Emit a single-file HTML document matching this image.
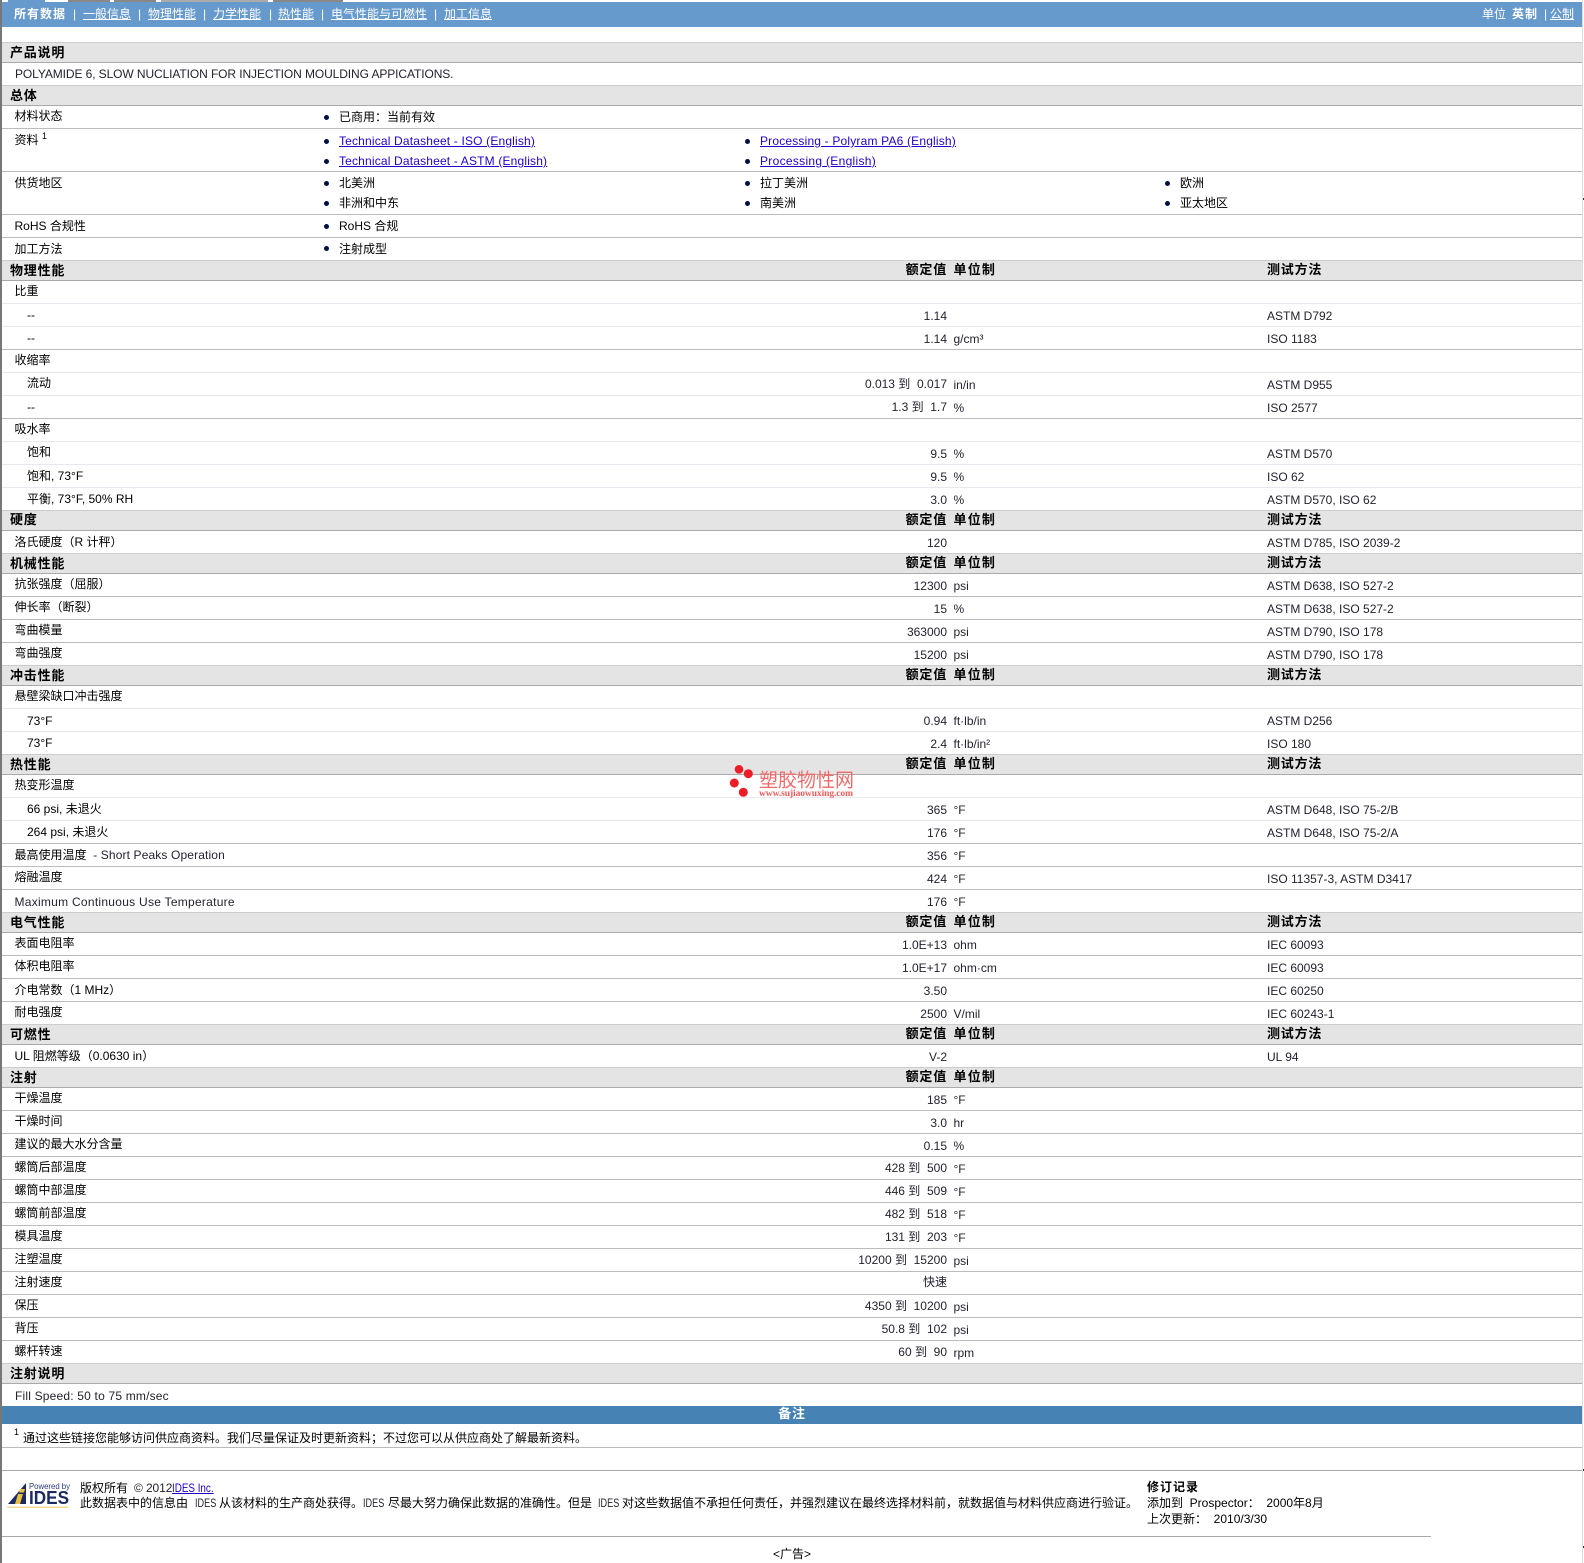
<!DOCTYPE html>
<html lang="zh"><head><meta charset="utf-8"><title>PA6</title>
<style>
html,body{margin:0;padding:0;background:#fff}
body{position:relative;width:1584px;height:1563px;overflow:hidden;font:12px/1 "Liberation Sans","WenQuanYi Zen Hei","Noto Sans CJK SC",sans-serif;color:#222230}
.r,.g{position:absolute;left:2px;width:1580px;box-sizing:border-box}
.r{height:23px;border-bottom:1px solid #bbbbc0}
.m{border-bottom-color:#e8e8ee}
.g{height:21px;background:#e4e4e4;border-top:1px solid #ccc;border-bottom:1px solid #aaa;font-weight:bold;font-size:13px;letter-spacing:.8px;color:#000}
.r span,.g span,.a{position:absolute;white-space:nowrap}
.l{left:12.5px;top:0;line-height:21px;color:#000}
.l2{line-height:23px}
.s{left:25px;top:0;line-height:22px;color:#000}
.s2{line-height:20px}
.v{right:635px;top:0;line-height:24px}
.d{top:-1px}
.u{left:951.5px;top:0;line-height:24px}
.t{left:1265px;top:0;line-height:24px}
.h{left:8px;top:0;line-height:19px}
.hv{right:635px;top:-1px;line-height:19px}
.hu{left:951.5px;top:-1px;line-height:19px;letter-spacing:1.2px}
.ht{left:1265px;top:-1px;line-height:19px}
.a{line-height:16px;color:#000}
.b{position:absolute;width:5px;height:5px;border-radius:50%;background:#001040}
a{color:#2200cc;text-decoration:underline}
i{font-style:normal}
.n{color:#fff;font-size:12px}
.n a{color:#fff}
.q{transform-origin:0 50%;color:#222230}
</style></head><body>
<div style="position:absolute;left:0;top:0;width:2px;height:1563px;background:#777"></div>
<div style="position:absolute;left:1582px;top:0;width:1px;height:1563px;background:#ddd"></div>
<div style="position:absolute;left:1583px;top:198px;width:1px;height:2px;background:#333"></div>
<div style="position:absolute;left:1583px;top:1469px;width:1px;height:2px;background:#333"></div>
<div style="position:absolute;left:1583px;top:1546px;width:1px;height:2px;background:#333"></div>
<div style="position:absolute;left:8px;top:0;width:37px;height:2px;background:#6699cc"></div>
<div style="position:absolute;left:68px;top:0;width:42px;height:2px;background:#888"></div>
<div style="position:absolute;left:114px;top:0;width:42px;height:2px;background:#888"></div>
<div style="position:absolute;left:161px;top:0;width:107px;height:2px;background:#aaa"></div>
<div style="position:absolute;left:273px;top:0;width:70px;height:2px;background:#888"></div>
<div style="position:absolute;left:2px;top:2px;width:1580px;height:25px;background:#6699cc"></div>
<div class="a n" style="left:14px;top:6px;font-weight:bold;letter-spacing:1px">所有数据</div>
<div class="a n" style="left:73px;top:6px">|</div><div class="a n" style="left:83px;top:6px"><a>一般信息</a></div>
<div class="a n" style="left:138px;top:6px">|</div><div class="a n" style="left:148px;top:6px"><a>物理性能</a></div>
<div class="a n" style="left:203px;top:6px">|</div><div class="a n" style="left:213px;top:6px"><a>力学性能</a></div>
<div class="a n" style="left:269px;top:6px">|</div><div class="a n" style="left:278px;top:6px"><a>热性能</a></div>
<div class="a n" style="left:321px;top:6px">|</div><div class="a n" style="left:331px;top:6px"><a>电气性能与可燃性</a></div>
<div class="a n" style="left:434px;top:6px">|</div><div class="a n" style="left:444px;top:6px"><a>加工信息</a></div>
<div class="a n" style="left:1482px;top:6px">单位</div>
<div class="a n" style="left:1512px;top:6px;font-weight:bold;letter-spacing:1px">英制</div>
<div class="a n" style="left:1544px;top:6px">|</div>
<div class="a n" style="left:1550px;top:6px"><a>公制</a></div>

<div class="g" style="top:42px"><span class="h">产品说明</span></div>
<div class="r" style="top:63px;height:22px;border:0"><span class="l" style="left:13px;top:1px;color:#222230;letter-spacing:-.095px">POLYAMIDE 6, SLOW NUCLIATION FOR INJECTION MOULDING APPICATIONS.</span></div>
<div class="g" style="top:85px"><span class="h">总体</span></div>
<div class="r" style="top:106px"><span class="l">材料状态</span></div>
<div class="r" style="top:129px;height:43px"><span class="l l2">资料 <sup style="font-size:9px;line-height:0">1</sup></span></div>
<div class="r" style="top:172px;height:43px"><span class="l l2">供货地区</span></div>
<div class="r" style="top:215px"><span class="l l2">RoHS 合规性</span></div>
<div class="r" style="top:238px;height:22px;border:0"><span class="l l2">加工方法</span></div>

<i class="b" style="left:324px;top:115px"></i><div class="a" style="left:339px;top:109px">已商用：当前有效</div>
<i class="b" style="left:324px;top:139px"></i><div class="a" style="left:339px;top:133px;letter-spacing:.17px"><a>Technical Datasheet - ISO (English)</a></div>
<i class="b" style="left:324px;top:159px"></i><div class="a" style="left:339px;top:153px;letter-spacing:.17px"><a>Technical Datasheet - ASTM (English)</a></div>
<i class="b" style="left:745px;top:139px"></i><div class="a" style="left:760px;top:133px;letter-spacing:.18px"><a>Processing - Polyram PA6 (English)</a></div>
<i class="b" style="left:745px;top:159px"></i><div class="a" style="left:760px;top:153px;letter-spacing:.3px"><a>Processing (English)</a></div>
<i class="b" style="left:324px;top:181px"></i><div class="a" style="left:339px;top:175px">北美洲</div>
<i class="b" style="left:324px;top:201px"></i><div class="a" style="left:339px;top:195px">非洲和中东</div>
<i class="b" style="left:745px;top:181px"></i><div class="a" style="left:760px;top:175px">拉丁美洲</div>
<i class="b" style="left:745px;top:201px"></i><div class="a" style="left:760px;top:195px">南美洲</div>
<i class="b" style="left:1165px;top:181px"></i><div class="a" style="left:1180px;top:175px">欧洲</div>
<i class="b" style="left:1165px;top:201px"></i><div class="a" style="left:1180px;top:195px">亚太地区</div>
<i class="b" style="left:324px;top:224px"></i><div class="a" style="left:339px;top:218px">RoHS 合规</div>
<i class="b" style="left:324px;top:246px"></i><div class="a" style="left:339px;top:241px">注射成型</div>

<div class="g" style="top:260px"><span class="h">物理性能</span><span class="hv">额定值</span><span class="hu">单位制</span><span class="ht">测试方法</span></div>
<div class="r m" style="top:281px"><span class="l">比重</span></div>
<div class="r m" style="top:304px"><span class="s">--</span><span class="v">1.14</span><span class="t">ASTM D792</span></div>
<div class="r" style="top:327px"><span class="s">--</span><span class="v">1.14</span><span class="u">g/cm³</span><span class="t">ISO 1183</span></div>
<div class="r m" style="top:350px"><span class="l">收缩率</span></div>
<div class="r m" style="top:373px"><span class="s s2">流动</span><span class="v d">0.013 到&nbsp; 0.017</span><span class="u">in/in</span><span class="t">ASTM D955</span></div>
<div class="r" style="top:396px"><span class="s">--</span><span class="v d">1.3 到&nbsp; 1.7</span><span class="u">%</span><span class="t">ISO 2577</span></div>
<div class="r m" style="top:419px"><span class="l">吸水率</span></div>
<div class="r m" style="top:442px"><span class="s s2">饱和</span><span class="v">9.5</span><span class="u">%</span><span class="t">ASTM D570</span></div>
<div class="r m" style="top:465px"><span class="s">饱和, 73°F</span><span class="v">9.5</span><span class="u">%</span><span class="t">ISO 62</span></div>
<div class="r" style="top:488px"><span class="s">平衡, 73°F, 50% RH</span><span class="v">3.0</span><span class="u">%</span><span class="t">ASTM D570, ISO 62</span></div>
<div class="g" style="top:510px"><span class="h" style="top:-1px">硬度</span><span class="hv">额定值</span><span class="hu">单位制</span><span class="ht">测试方法</span></div>
<div class="r" style="top:531px"><span class="l l2">洛氏硬度（R 计秤）</span><span class="v">120</span><span class="t">ASTM D785, ISO 2039-2</span></div>
<div class="g" style="top:553px"><span class="h">机械性能</span><span class="hv">额定值</span><span class="hu">单位制</span><span class="ht">测试方法</span></div>
<div class="r" style="top:574px"><span class="l">抗张强度（屈服）</span><span class="v">12300</span><span class="u">psi</span><span class="t">ASTM D638, ISO 527-2</span></div>
<div class="r" style="top:597px"><span class="l">伸长率（断裂）</span><span class="v">15</span><span class="u">%</span><span class="t">ASTM D638, ISO 527-2</span></div>
<div class="r" style="top:620px"><span class="l">弯曲模量</span><span class="v">363000</span><span class="u">psi</span><span class="t">ASTM D790, ISO 178</span></div>
<div class="r" style="top:643px"><span class="l">弯曲强度</span><span class="v">15200</span><span class="u">psi</span><span class="t">ASTM D790, ISO 178</span></div>
<div class="g" style="top:665px"><span class="h">冲击性能</span><span class="hv">额定值</span><span class="hu">单位制</span><span class="ht">测试方法</span></div>
<div class="r m" style="top:686px"><span class="l">悬壁梁缺口冲击强度</span></div>
<div class="r m" style="top:709px"><span class="s" style="line-height:24px">73°F</span><span class="v">0.94</span><span class="u">ft·lb/in</span><span class="t">ASTM D256</span></div>
<div class="r" style="top:732px"><span class="s">73°F</span><span class="v">2.4</span><span class="u">ft·lb/in²</span><span class="t">ISO 180</span></div>
<div class="g" style="top:754px"><span class="h">热性能</span><span class="hv">额定值</span><span class="hu">单位制</span><span class="ht">测试方法</span></div>
<div class="r m" style="top:775px"><span class="l">热变形温度</span></div>
<div class="r m" style="top:798px"><span class="s">66 psi, 未退火</span><span class="v">365</span><span class="u">°F</span><span class="t">ASTM D648, ISO 75-2/B</span></div>
<div class="r" style="top:821px"><span class="s">264 psi, 未退火</span><span class="v">176</span><span class="u">°F</span><span class="t">ASTM D648, ISO 75-2/A</span></div>
<div class="r" style="top:844px"><span class="l l2">最高使用温度&nbsp; <i style="letter-spacing:.13px;color:#222230">- Short Peaks Operation</i></span><span class="v">356</span><span class="u">°F</span></div>
<div class="r" style="top:867px"><span class="l">熔融温度</span><span class="v">424</span><span class="u">°F</span><span class="t">ISO 11357-3, ASTM D3417</span></div>
<div class="r" style="top:890px"><span class="l" style="line-height:24px;letter-spacing:.27px;color:#222230">Maximum Continuous Use Temperature</span><span class="v">176</span><span class="u">°F</span></div>
<div class="g" style="top:912px"><span class="h">电气性能</span><span class="hv">额定值</span><span class="hu">单位制</span><span class="ht">测试方法</span></div>
<div class="r" style="top:933px"><span class="l">表面电阻率</span><span class="v">1.0E+13</span><span class="u">ohm</span><span class="t">IEC 60093</span></div>
<div class="r" style="top:956px"><span class="l">体积电阻率</span><span class="v">1.0E+17</span><span class="u">ohm·cm</span><span class="t">IEC 60093</span></div>
<div class="r" style="top:979px"><span class="l l2">介电常数（1 MHz）</span><span class="v">3.50</span><span class="t">IEC 60250</span></div>
<div class="r" style="top:1002px"><span class="l">耐电强度</span><span class="v">2500</span><span class="u">V/mil</span><span class="t">IEC 60243-1</span></div>
<div class="g" style="top:1024px"><span class="h">可燃性</span><span class="hv">额定值</span><span class="hu">单位制</span><span class="ht">测试方法</span></div>
<div class="r" style="top:1045px"><span class="l l2">UL 阻燃等级（0.0630 in）</span><span class="v">V-2</span><span class="t">UL 94</span></div>
<div class="g" style="top:1067px"><span class="h">注射</span><span class="hv">额定值</span><span class="hu">单位制</span></div>
<div class="r" style="top:1088px"><span class="l">干燥温度</span><span class="v">185</span><span class="u">°F</span></div>
<div class="r" style="top:1111px"><span class="l">干燥时间</span><span class="v">3.0</span><span class="u">hr</span></div>
<div class="r" style="top:1134px"><span class="l">建议的最大水分含量</span><span class="v">0.15</span><span class="u">%</span></div>
<div class="r" style="top:1157px"><span class="l">螺筒后部温度</span><span class="v d">428 到&nbsp; 500</span><span class="u d">°F</span></div>
<div class="r" style="top:1180px"><span class="l">螺筒中部温度</span><span class="v d">446 到&nbsp; 509</span><span class="u d">°F</span></div>
<div class="r" style="top:1203px"><span class="l">螺筒前部温度</span><span class="v d">482 到&nbsp; 518</span><span class="u d">°F</span></div>
<div class="r" style="top:1226px"><span class="l">模具温度</span><span class="v d">131 到&nbsp; 203</span><span class="u d">°F</span></div>
<div class="r" style="top:1249px"><span class="l">注塑温度</span><span class="v d">10200 到&nbsp; 15200</span><span class="u">psi</span></div>
<div class="r" style="top:1272px"><span class="l">注射速度</span><span class="v" style="line-height:21px">快速</span></div>
<div class="r" style="top:1295px"><span class="l">保压</span><span class="v d">4350 到&nbsp; 10200</span><span class="u">psi</span></div>
<div class="r" style="top:1318px"><span class="l">背压</span><span class="v d">50.8 到&nbsp; 102</span><span class="u">psi</span></div>
<div class="r" style="top:1341px"><span class="l">螺杆转速</span><span class="v d">60 到&nbsp; 90</span><span class="u">rpm</span></div>
<div class="g" style="top:1363px"><span class="h">注射说明</span></div>
<div class="r" style="top:1384px;height:22px;border:0"><span class="l" style="left:13px;line-height:24px;color:#222230;letter-spacing:.19px">Fill Speed: 50 to 75 mm/sec</span></div>
<div style="position:absolute;left:2px;top:1406px;width:1580px;height:18px;background:#4682b4;color:#fff;font-weight:bold;font-size:13px;letter-spacing:.8px;line-height:16px;text-align:center">备注</div>
<div class="a" style="left:14px;top:1426px;font-size:9px;line-height:12px">1</div>
<div class="a" style="left:23px;top:1430px">通过这些链接您能够访问供应商资料。我们尽量保证及时更新资料；不过您可以从供应商处了解最新资料。</div>
<div style="position:absolute;left:2px;top:1447px;width:1580px;height:1px;background:#bbb"></div>
<div style="position:absolute;left:2px;top:1470px;width:1580px;height:1px;background:#aaa"></div>
<div style="position:absolute;left:2px;top:1536px;width:1429px;height:1px;background:#aaa"></div>

<svg style="position:absolute;left:7px;top:1482px" width="64" height="27" viewBox="0 0 64 27">
<path d="M1 22 L19 1 L19 22 Z" fill="#1b2a60"/>
<path d="M11 12 L16 12 L13 22 L8 22 Z M13 7 L18 7 L17 10.500 L12 10.500 Z" fill="#e8c040"/>
<text x="22" y="7" font-family="Liberation Sans" font-size="8.500" fill="#2a3a80" textLength="41" lengthAdjust="spacingAndGlyphs">Powered by</text>
<text x="22" y="22" font-family="Liberation Sans" font-size="18" font-weight="bold" fill="#1b2a60" textLength="40" lengthAdjust="spacingAndGlyphs">IDES</text>
<rect x="0" y="24.500" width="61" height="1.500" fill="#f5dc8c"/>
</svg>
<div class="a" style="left:80px;top:1480px">版权所有</div>
<div class="a q" style="left:134px;top:1480px;letter-spacing:-.1px">© 2012</div>
<div class="a q" style="left:172px;top:1480px;transform:scaleX(.82)"><a>IDES Inc.</a></div>
<div class="a" style="left:80px;top:1495px">此数据表中的信息由</div>
<div class="a q" style="left:195px;top:1495px;transform:scaleX(.76)">IDES</div>
<div class="a" style="left:219px;top:1495px">从该材料的生产商处获得。</div>
<div class="a q" style="left:363px;top:1495px;transform:scaleX(.76)">IDES</div>
<div class="a" style="left:388px;top:1495px">尽最大努力确保此数据的准确性。但是</div>
<div class="a q" style="left:598px;top:1495px;transform:scaleX(.76)">IDES</div>
<div class="a" style="left:622px;top:1495px">对这些数据值不承担任何责任，并强烈建议在最终选择材料前，就数据值与材料供应商进行验证。</div>
<div class="a" style="left:1147px;top:1479px;font-weight:bold;letter-spacing:1px">修订记录</div>
<div class="a" style="left:1147px;top:1495px">添加到&nbsp; Prospector：&nbsp; 2000年8月</div>
<div class="a" style="left:1147px;top:1511px">上次更新：&nbsp; 2010/3/30</div>
<div class="a" style="left:0;width:1584px;text-align:center;top:1546px">&lt;广告&gt;</div>

<svg style="position:absolute;left:725px;top:760px" width="140" height="42" viewBox="0 0 140 42">
<circle cx="14" cy="9.300" r="4.300" fill="#ee1c25"/><circle cx="23.300" cy="13.700" r="4.500" fill="#ee1c25"/>
<circle cx="9.300" cy="23" r="4.500" fill="#ee1c25"/><circle cx="18.300" cy="32.300" r="4.500" fill="#ee1c25"/>
<text x="34" y="26.500" font-family="WenQuanYi Zen Hei,Noto Sans CJK SC,sans-serif" font-size="19" fill="#f06a6a" textLength="95">塑胶物性网</text>
<text x="34" y="36" font-family="Liberation Serif,serif" font-size="9.500" font-weight="bold" fill="#f25a5a" textLength="94">www.sujiaowuxing.com</text>
</svg>
</body></html>
